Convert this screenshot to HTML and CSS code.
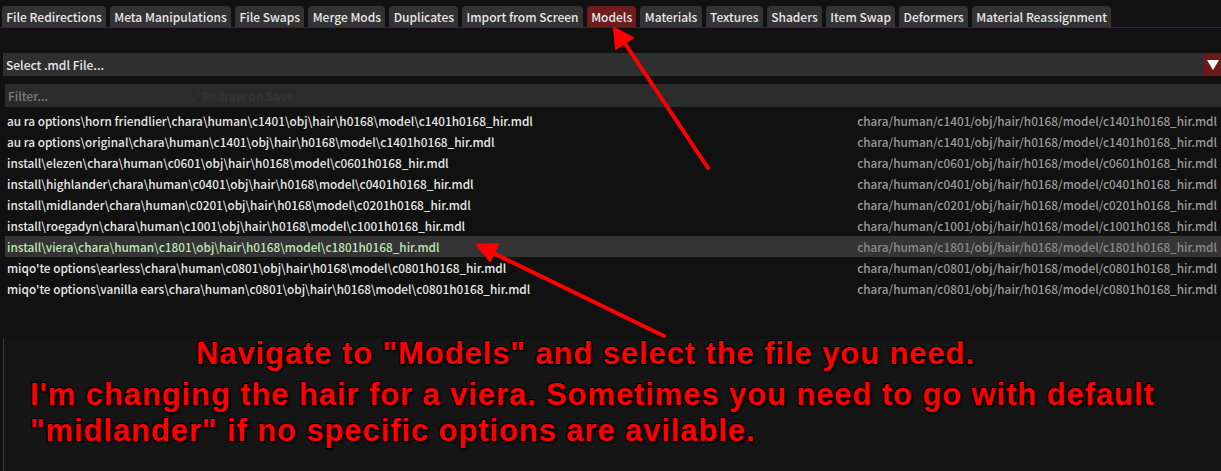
FILE: index.html
```html
<!DOCTYPE html>
<html lang="en">
<head>
  <meta charset="UTF-8">
  <title>Models - Item Swap</title>
  <link rel="stylesheet" href="styles.css">
</head>
<body>
  <div class="tabs">
    <div class="tab">File Redirections</div>
    <div class="tab">Meta Manipulations</div>
    <div class="tab">File Swaps</div>
    <div class="tab">Merge Mods</div>
    <div class="tab">Duplicates</div>
    <div class="tab">Import from Screen</div>
    <div class="tab active">Models</div>
    <div class="tab">Materials</div>
    <div class="tab">Textures</div>
    <div class="tab">Shaders</div>
    <div class="tab">Item Swap</div>
    <div class="tab">Deformers</div>
    <div class="tab">Material Reassignment</div>
  </div>

  <div class="combo">
    <span class="combo-label">Select .mdl File...</span>
    <span class="combo-arrow"></span>
  </div>

  <div class="filter">
    <span class="placeholder">Filter...</span>
    <span class="ghost">&#10003; Redraw on Save</span>
  </div>

  <div class="list">
    <div class="row"><span>au ra options\horn friendlier\chara\human\c1401\obj\hair\h0168\model\c1401h0168_hir.mdl</span><span class="game">chara/human/c1401/obj/hair/h0168/model/c1401h0168_hir.mdl</span></div>
    <div class="row"><span>au ra options\original\chara\human\c1401\obj\hair\h0168\model\c1401h0168_hir.mdl</span><span class="game">chara/human/c1401/obj/hair/h0168/model/c1401h0168_hir.mdl</span></div>
    <div class="row"><span>install\elezen\chara\human\c0601\obj\hair\h0168\model\c0601h0168_hir.mdl</span><span class="game">chara/human/c0601/obj/hair/h0168/model/c0601h0168_hir.mdl</span></div>
    <div class="row"><span>install\highlander\chara\human\c0401\obj\hair\h0168\model\c0401h0168_hir.mdl</span><span class="game">chara/human/c0401/obj/hair/h0168/model/c0401h0168_hir.mdl</span></div>
    <div class="row"><span>install\midlander\chara\human\c0201\obj\hair\h0168\model\c0201h0168_hir.mdl</span><span class="game">chara/human/c0201/obj/hair/h0168/model/c0201h0168_hir.mdl</span></div>
    <div class="row"><span>install\roegadyn\chara\human\c1001\obj\hair\h0168\model\c1001h0168_hir.mdl</span><span class="game">chara/human/c1001/obj/hair/h0168/model/c1001h0168_hir.mdl</span></div>
    <div class="row selected"><span>install\viera\chara\human\c1801\obj\hair\h0168\model\c1801h0168_hir.mdl</span><span class="game">chara/human/c1801/obj/hair/h0168/model/c1801h0168_hir.mdl</span></div>
    <div class="row"><span>miqo'te options\earless\chara\human\c0801\obj\hair\h0168\model\c0801h0168_hir.mdl</span><span class="game">chara/human/c0801/obj/hair/h0168/model/c0801h0168_hir.mdl</span></div>
    <div class="row"><span>miqo'te options\vanilla ears\chara\human\c0801\obj\hair\h0168\model\c0801h0168_hir.mdl</span><span class="game">chara/human/c0801/obj/hair/h0168/model/c0801h0168_hir.mdl</span></div>
  </div>

  <div class="panel">
    <p class="note note-main">Navigate to "Models" and select the file you need.</p>
    <p class="note note-second">I'm changing the hair for a viera. Sometimes you need to go with default</p>
    <p class="note">"midlander" if no specific options are avilable.</p>
  </div>

  <!-- annotation arrows drawn over the screenshot -->
  <svg class="arrows" width="1221" height="471" viewBox="0 0 1221 471">
    <g fill="#ff0000" stroke="#ff0000" stroke-linecap="round" stroke-linejoin="round">
      <line x1="708" y1="168" x2="624" y2="42" stroke-width="4"/>
      <polygon points="614,28 616,49 633,38" stroke-width="2"/>
      <line x1="664" y1="336" x2="493" y2="253" stroke-width="4"/>
      <polygon points="477,245 490,261 498,244" stroke-width="2"/>
    </g>
  </svg>
</body>
</html>
```

FILE: styles.css
```css
body {
  margin: 0;
  background: #111111;
  color: #e8e8e8;
  font-family: "Noto Sans CJK JP", "Noto Sans", sans-serif;
  font-weight: 500;
  font-size: 12px;
  width: 1221px;
  height: 471px;
  overflow: hidden;
  position: relative;
}

.tabs {
  display: flex;
  gap: 4px;
  padding: 6px 0 0 2px;
  border-bottom: 1px solid #5a1a1a;
}
.tab {
  height: 21px;
  line-height: 21px;
  padding: 0 4.3px;
  background: #333333;
  border-radius: 4px 4px 0 0;
  white-space: nowrap;
}
.tab.active {
  background: #6e1d1d;
}

.combo {
  display: flex;
  align-items: center;
  height: 23px;
  margin: 25px 0 0 3px;
  background: #2f2f2f;
}
.combo-label {
  flex: 1;
  padding-left: 3px;
}
.combo-arrow {
  width: 18px;
  height: 23px;
  background: #6a1818;
  position: relative;
}
.combo-arrow::after {
  content: "";
  position: absolute;
  left: 4px;
  top: 7px;
  border-left: 6px solid transparent;
  border-right: 6px solid transparent;
  border-top: 10px solid #ffffff;
}

.filter {
  display: flex;
  align-items: center;
  height: 23px;
  margin: 8px 0 0 5px;
  background: #2b2b2b;
}
.placeholder {
  color: #7c7c7c;
  padding-left: 3px;
  width: 183px;
}
.ghost {
  color: #363636;
}

.list {
  margin: 3px 0 0 5px;
  height: 229px;
  font-size: 11.8px;
}
.row {
  display: flex;
  justify-content: space-between;
  height: 21px;
  line-height: 21px;
  padding: 0 4px 0 2px;
  white-space: nowrap;
}
.row .game {
  color: #9a9a9a;
}
.row.selected {
  background: #343434;
  color: #bfe6b6;
}
.row.selected .game {
  color: #8a8a8a;
}

.panel {
  margin-left: 3px;
  border-left: 1px solid #3a3a3a;
  background: #151515;
  height: 132px;
}
.note {
  margin: 0 0 6px;
  font-family: "Liberation Sans", Arial, sans-serif;
  font-weight: bold;
  font-size: 31px;
  letter-spacing: 0.9px;
  line-height: 30px;
  color: #ff0000;
  padding-left: 26px;
  white-space: nowrap;
  text-shadow: 1px 1px 0 #000, -1px -1px 0 #000, 1px -1px 0 #000, -1px 1px 0 #000, 2px 2px 2px #000;
}
.note-main {
  margin-top: 0;
  margin-bottom: 11px;
  padding-left: 192px;
}

.arrows {
  position: absolute;
  left: 0;
  top: 0;
}
```
